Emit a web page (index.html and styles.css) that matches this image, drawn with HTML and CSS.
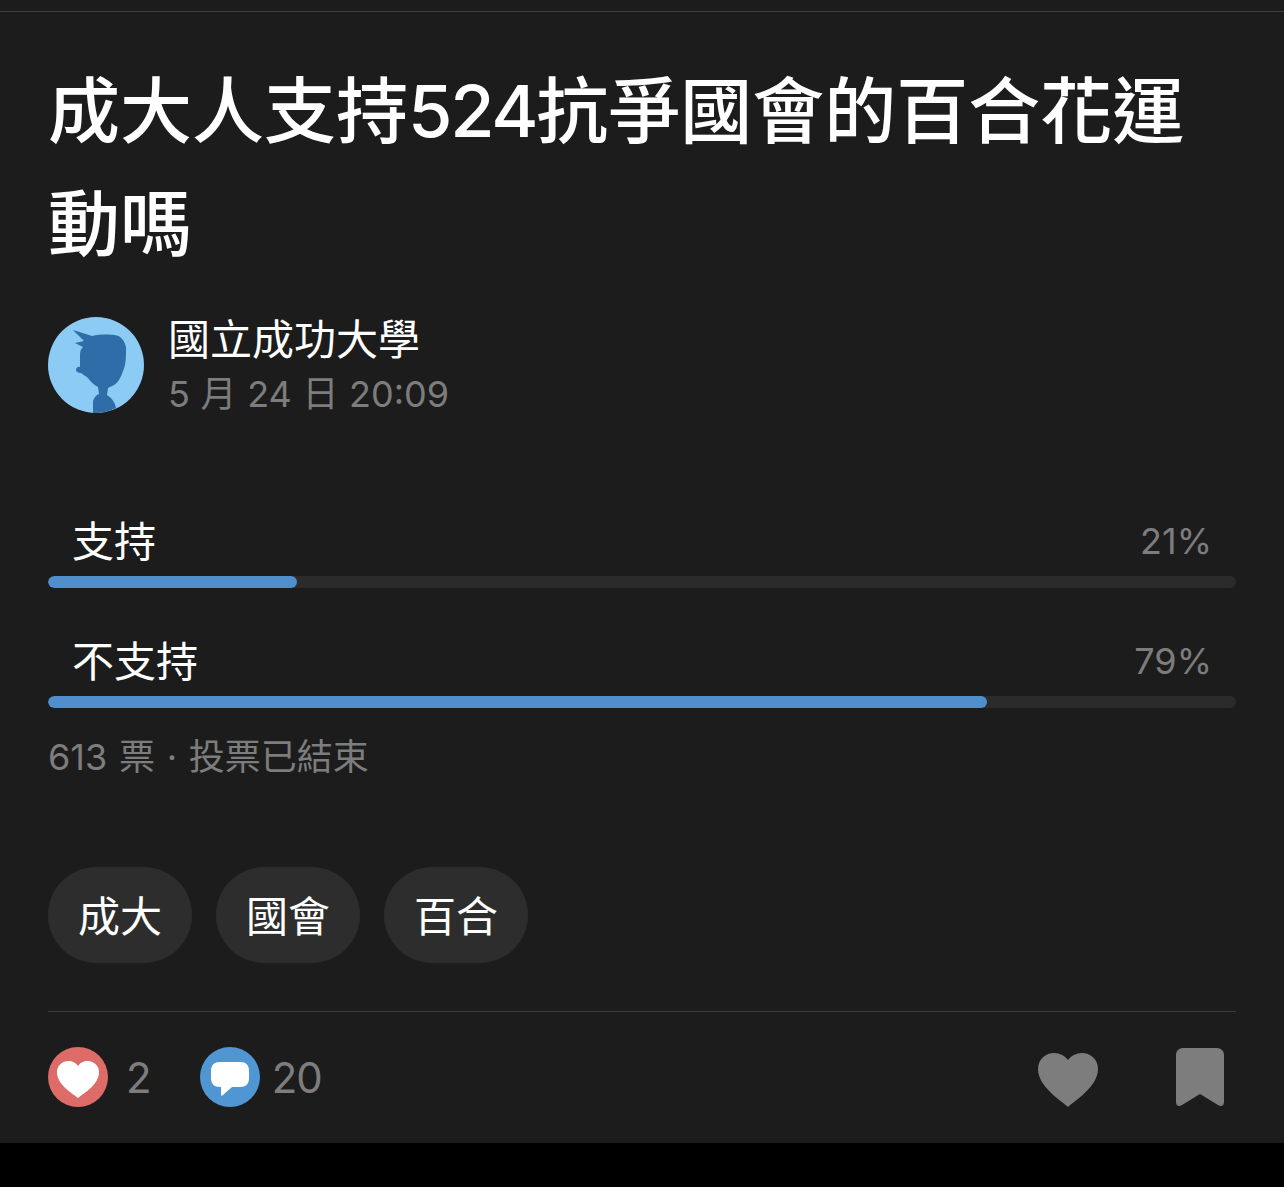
FILE: index.html
```html
<!DOCTYPE html>
<html lang="zh-Hant">
<head>
    <meta charset="UTF-8">
    <meta name="viewport" content="width=device-width, initial-scale=1.0">
    <title>成大人支持524抗爭國會的百合花運動嗎</title>
    <link rel="stylesheet" href="styles.css">
</head>
<body>
    <div class="post">
        <h1 class="title">成大人支持<span class="title_num">524</span>抗爭國會的百合花運<span class="title_line">動嗎</span></h1>

        <div class="author">
            <svg class="avatar" viewBox="0 0 96 96">
                <circle cx="48" cy="48" r="48" fill="#8ccbf4"/>
                <path fill="#2e6da8" d="M25 13 L44 19 C54 17 68 17 72 20 C76 23 79 29 78 35 C78 44 77 50 75 54 C73 60 70 66 66 68 L60 71 L59 78 C64 81 67 86 68 91 C62 94 54 96 45 96 L45 84 C46 81 48 78 51 77 L50 70 C46 68 42 64 40 61 L33 56 C30 56 28 54 28 53 C28 51 30 49 32 50 L32 38 C32 34 33 32 35 30 L27 26 L36 24 Z"/>
            </svg>
            <div class="author_info">
                <div class="author_name">國立成功大學</div>
                <div class="author_date">5 月 24 日 20:09</div>
            </div>
        </div>

        <div class="poll">
            <div class="option">
                <div class="option_row"><span class="option_name">支持</span><span class="option_pct">21%</span></div>
                <div class="bar"><div class="bar_fill" style="width: 21%"></div></div>
            </div>
            <div class="option">
                <div class="option_row"><span class="option_name">不支持</span><span class="option_pct">79%</span></div>
                <div class="bar"><div class="bar_fill" style="width: 79%"></div></div>
            </div>
            <p class="poll_status">613 票 · 投票已結束</p>
        </div>

        <div class="tags">
            <a class="tag" href="#">成大</a>
            <a class="tag" href="#">國會</a>
            <a class="tag" href="#">百合</a>
        </div>

        <div class="actions">
            <div class="counts">
                <svg class="count_icon" viewBox="0 0 60 60">
                    <circle cx="30" cy="30" r="30" fill="#dd6b67"/>
                    <path fill="#fff" d="M30 51 C24 46 9 38 9 25 C9 18 15 14 20 14 C25 14 28 16 30 19 C32 16 35 14 40 14 C45 14 51 18 51 25 C51 38 36 46 30 51 Z"/>
                </svg>
                <span class="count like_count">2</span>
                <svg class="count_icon" viewBox="0 0 60 60">
                    <circle cx="30" cy="30" r="30" fill="#4f96d2"/>
                    <path fill="#fff" d="M20 15 H40 C46 15 49 18 49 24 V31 C49 37 46 40 40 40 H32 L23 48 C22 49 21 49 21 47 V40 H20 C14 40 11 37 11 31 V24 C11 18 14 15 20 15 Z"/>
                </svg>
                <span class="count">20</span>
            </div>
            <div class="buttons">
                <svg class="heart_btn" viewBox="0 0 60 54">
                    <path fill="#7d7d7d" d="M30 54 C22 47 0 33 0 16 C0 6 8 0 16 0 C22 0 27 3 30 7 C33 3 38 0 44 0 C52 0 60 6 60 16 C60 33 38 47 30 54 Z"/>
                </svg>
                <svg class="bookmark_btn" viewBox="0 0 48 58">
                    <path fill="#7d7d7d" d="M7 0 H41 C45 0 48 3 48 7 V54 C48 58 45 59 42 57 L24 46 L6 57 C3 59 0 58 0 54 V7 C0 3 3 0 7 0 Z"/>
                </svg>
            </div>
        </div>
    </div>
</body>
</html>
```

FILE: styles.css
```css
* {
    padding: 0;
    margin: 0;
    box-sizing: border-box;
    font-family: Inter, "Noto Sans CJK TC", sans-serif;
}

body {
    background: #000;
}

.post {
    height: 1143px;
    padding: 11px 48px 0 48px;
    background: #1c1c1c;
    overflow: hidden;
}

.post::before {
    content: "";
    display: block;
    height: 1px;
    margin: 0 -48px;
    background: #3f3f3f;
}

.title {
    margin-top: 42px;
    font-size: 72px;
    line-height: 113px;
    font-weight: 500;
    color: #fff;
}

.title_num {
    letter-spacing: -2.3px;
}

.title_line {
    display: block;
}

.author {
    display: flex;
    align-items: flex-start;
    gap: 24px;
    margin-top: 37px;
}

.avatar {
    width: 96px;
    height: 96px;
    flex-shrink: 0;
}

.author_info {
    margin-top: -2px;
}

.author_name {
    font-size: 42px;
    line-height: 50px;
    color: #fff;
}

.author_date {
    font-size: 36px;
    line-height: 58px;
    word-spacing: 0.5px;
    color: #7d7d7d;
}

.poll {
    margin-top: 83px;
}

.option {
    margin-bottom: 38px;
}

.option_row {
    display: flex;
    justify-content: space-between;
    align-items: center;
    height: 70px;
    padding: 0 24px;
}

.option_name {
    margin-bottom: 6px;
    font-size: 42px;
    color: #fff;
}

.option_pct {
    font-size: 36px;
    color: #7d7d7d;
}

.bar {
    height: 12px;
    border-radius: 6px;
    background: #2b2b2b;
    overflow: hidden;
}

.bar_fill {
    height: 100%;
    border-radius: 6px;
    background: #4f8fcb;
}

.poll_status {
    margin-top: -15px;
    font-size: 36px;
    line-height: 52px;
    word-spacing: 1.6px;
    color: #7d7d7d;
}

.tags {
    display: flex;
    gap: 24px;
    margin-top: 84px;
}

.tag {
    display: flex;
    align-items: center;
    justify-content: center;
    width: 144px;
    height: 96px;
    padding-bottom: 4px;
    border-radius: 48px;
    background: #2d2d2d;
    font-size: 42px;
    color: #fff;
    text-decoration: none;
}

.actions {
    display: flex;
    justify-content: space-between;
    align-items: center;
    margin-top: 48px;
    padding-top: 35px;
    border-top: 1px solid #3a3a3a;
}

.counts {
    display: flex;
    align-items: center;
}

.count_icon {
    width: 60px;
    height: 60px;
}

.count {
    margin-left: 12px;
    font-size: 42px;
    letter-spacing: -1px;
    color: #7d7d7d;
}

.like_count {
    margin-left: 18px;
    margin-right: 49px;
}

.buttons {
    display: flex;
    align-items: center;
    gap: 78px;
    padding-right: 12px;
}

.heart_btn {
    width: 60px;
    height: 54px;
    margin-top: 6px;
}

.bookmark_btn {
    width: 48px;
    height: 58px;
}
```
